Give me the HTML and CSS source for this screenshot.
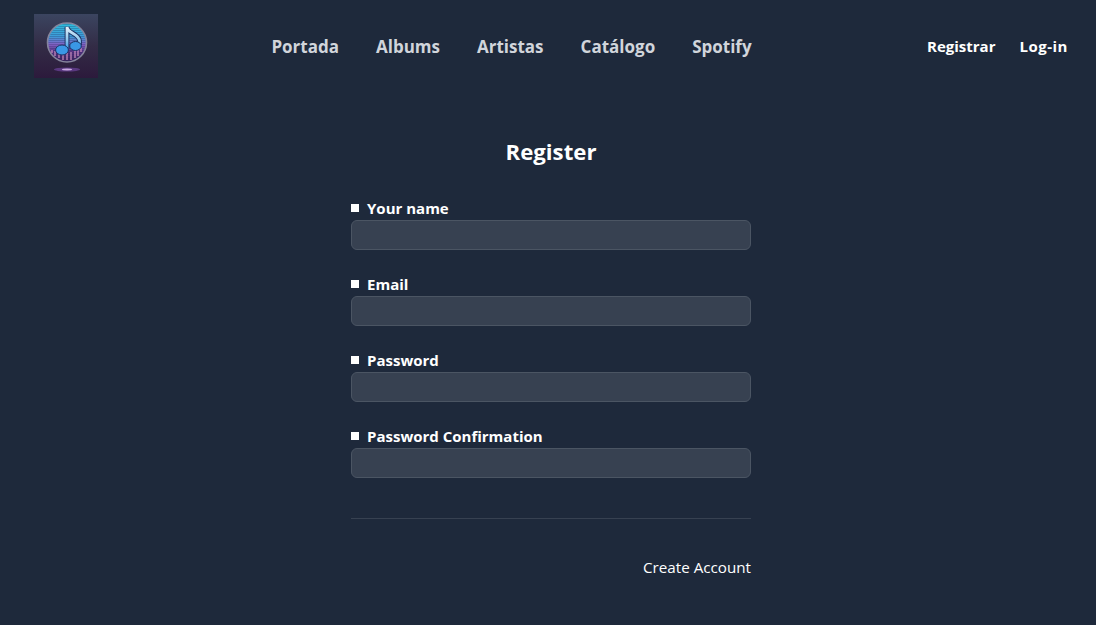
FILE: index.html
```html
<!DOCTYPE html>
<html lang="en">
<head>
<meta charset="utf-8">
<title>Register</title>
<link rel="stylesheet" href="styles.css">
</head>
<body>
<header class="topbar">
  <a class="logo" href="#" aria-label="Logo">
    <svg width="64" height="64" viewBox="0 0 64 64">
      <defs>
        <linearGradient id="bg" x1="0" y1="0" x2="0" y2="1">
          <stop offset="0" stop-color="#3b4560"/>
          <stop offset="0.5" stop-color="#332c46"/>
          <stop offset="1" stop-color="#2c1a3c"/>
        </linearGradient>
        <linearGradient id="disc" x1="0" y1="0" x2="0" y2="1">
          <stop offset="0" stop-color="#2cc0dc"/>
          <stop offset="0.35" stop-color="#3f9ad8"/>
          <stop offset="0.55" stop-color="#8460c4"/>
          <stop offset="0.75" stop-color="#553080"/>
          <stop offset="1" stop-color="#3a2058"/>
        </linearGradient>
        <linearGradient id="note" x1="0" y1="0" x2="0" y2="1">
          <stop offset="0" stop-color="#e4eef8"/>
          <stop offset="0.6" stop-color="#8cc6ee"/>
          <stop offset="1" stop-color="#3a9ae6"/>
        </linearGradient>
        <pattern id="lines" width="2" height="2" patternUnits="userSpaceOnUse">
          <rect width="2" height="1" fill="#1e2a5a" opacity="0.28"/>
        </pattern>
      </defs>
      <rect width="64" height="64" fill="url(#bg)"/>
      <circle cx="33" cy="28.5" r="19.5" fill="url(#disc)" stroke="#85849c" stroke-width="1.6"/>
      <circle cx="33" cy="28.5" r="18.5" fill="url(#lines)"/>
      <path d="M18 39v-3M21 42v-5M25 44v-7M29 46v-6M33 46v-10M37 46v-8M41 44v-13M44 42v-7M47 38v-4" stroke="#d89ac8" stroke-width="1.1"/>
      <ellipse cx="33" cy="55.5" rx="13" ry="2" fill="#5a3880"/>
      <ellipse cx="33" cy="55.5" rx="5" ry="0.9" fill="#c8a8e0"/>
      <path d="M33 35V13c1 7 12 6 12.500 14v4" fill="none" stroke="#1c3264" stroke-width="4.8"/>
      <path d="M33 35V13c1 7 12 6 12.500 14v4" fill="none" stroke="url(#note)" stroke-width="2.8"/>
      <ellipse cx="28" cy="36" rx="6.400" ry="5" fill="#3a97e6" stroke="#1c3264"/>
      <ellipse cx="41.500" cy="32" rx="5.800" ry="4.500" fill="#3a97e6" stroke="#1c3264"/>
    </svg>
  </a>
  <nav class="mainnav">
    <a href="#">Portada</a>
    <a href="#">Albums</a>
    <a href="#">Artistas</a>
    <a href="#">Catálogo</a>
    <a href="#">Spotify</a>
  </nav>
  <div class="authnav">
    <a href="#">Registrar</a>
    <a class="login" href="#">Log-in</a>
  </div>
</header>
<main class="page">
  <h1 class="title">Register</h1>
  <form class="form">
    <div class="field">
      <label class="label" for="name">Your name</label>
      <input class="input" id="name" type="text">
    </div>
    <div class="field">
      <label class="label" for="email">Email</label>
      <input class="input" id="email" type="email">
    </div>
    <div class="field">
      <label class="label" for="pw">Password</label>
      <input class="input" id="pw" type="password">
    </div>
    <div class="field">
      <label class="label" for="pwc">Password Confirmation</label>
      <input class="input" id="pwc" type="password">
    </div>
    <hr class="divider">
    <div class="actions">
      <button class="submit" type="button">Create Account</button>
    </div>
  </form>
</main>
</body>
</html>
```

FILE: styles.css
```css
* { box-sizing: border-box; }
html, body { height: 100%; }
body {
  margin: 0;
  background: #1e293b;
  color: #fff;
  font-family: "Open Sans", "Noto Sans", sans-serif;
  overflow: hidden;
}
a { text-decoration: none; color: inherit; }
.topbar {
  display: flex;
  align-items: flex-start;
  justify-content: space-between;
  padding: 14px 28px 0 34px;
  height: 78px;
}
.logo { display: block; width: 64px; height: 64px; }
.logo svg { display: block; }
.mainnav {
  display: flex;
  gap: 37px;
  margin: 21px 2px 0 0;
  font-size: 17px;
  line-height: 24px;
  font-weight: 700;
  color: #d1d5db;
}
.authnav {
  display: flex;
  gap: 24px;
  margin-top: 20px;
  font-size: 15px;
  line-height: 24px;
  font-weight: 700;
}
.login { letter-spacing: 0.5px; }
.page {
  width: 400px;
  margin: 0 auto;
  position: relative;
  left: 3px;
}
.title {
  margin: 58px 0 0;
  text-align: center;
  font-size: 22.2px;
  line-height: 32px;
  font-weight: 700;
}
.form { margin-top: 28px; }
.field { margin-bottom: 22px; }
.label {
  display: flex;
  align-items: center;
  height: 24px;
  font-size: 15px;
  line-height: 24px;
  font-weight: 700;
  gap: 8px;
}
.label::before {
  content: "";
  width: 8px;
  height: 8px;
  background: #fff;
  margin-top: -1px;
}
.input {
  display: block;
  width: 100%;
  height: 30px;
  background: #374151;
  border: 1px solid #4b5563;
  border-radius: 6px;
  margin: 0;
}
.divider {
  border: 0;
  border-top: 1px solid #374151;
  margin: 40px 0 0;
}
.actions {
  display: flex;
  justify-content: flex-end;
  margin-top: 36px;
}
.submit {
  background: none;
  border: 0;
  padding: 0;
  color: #fff;
  font: 400 15.2px/24px "Open Sans", "Noto Sans", sans-serif;
}
```
